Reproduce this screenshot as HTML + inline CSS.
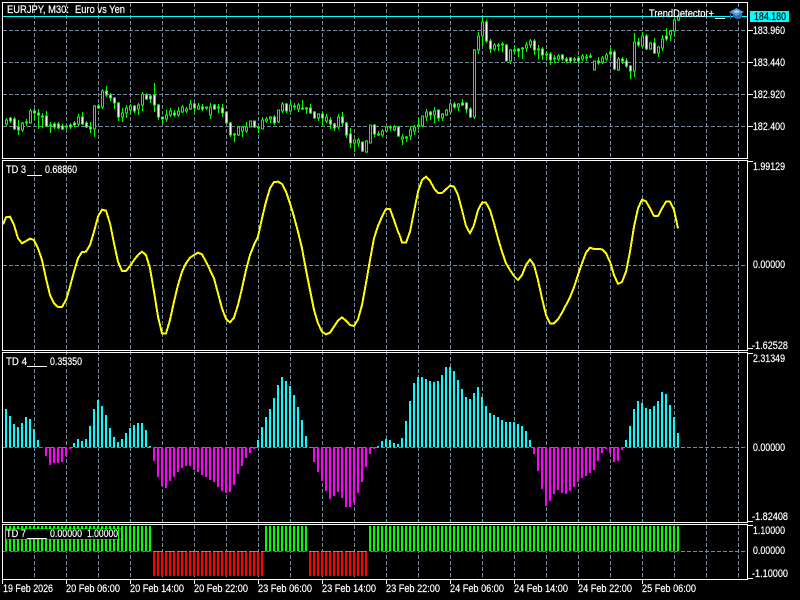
<!DOCTYPE html>
<html><head><meta charset="utf-8"><title>EURJPY M30</title>
<style>
html,body{margin:0;padding:0;background:#000;width:800px;height:600px;overflow:hidden}
svg{display:block;position:absolute;left:0;top:0}
text{font-family:"Liberation Sans",sans-serif;font-size:11px;fill:#fff;stroke:#fff;stroke-width:.2}
.c{shape-rendering:crispEdges}
</style></head><body>
<svg width="800" height="600" viewBox="0 0 800 600" xmlns="http://www.w3.org/2000/svg">
<rect width="800" height="600" fill="#000"/>
<g class="c" fill="none" stroke="#778899" stroke-width="1" stroke-dasharray="4 2">
<path d="M34.5 3V579M66.5 3V579M98.5 3V579M130.5 3V579M162.5 3V579M194.5 3V579M226.5 3V579M258.5 3V579M290.5 3V579M322.5 3V579M354.5 3V579M386.5 3V579M418.5 3V579M450.5 3V579M482.5 3V579M514.5 3V579M546.5 3V579M578.5 3V579M610.5 3V579M642.5 3V579M674.5 3V579M706.5 3V579M738.5 3V579"/>
<path d="M3 30.5H747M3 62.5H747M3 94.5H747M3 126.5H747M3 265.5H747M3 447.5H747M3 551.5H747"/>
</g>
<!-- candles -->
<g class="c" stroke="#00ff00" stroke-width="1">
<path fill="none" d="M6.5 118V126M10.5 117V123M14.5 117V130M18.5 120V135M22.5 122V132M26.5 119V126M30.5 109V123M34.5 109V120M38.5 109V129M42.5 113V128M46.5 111V127M50.5 122V133M54.5 122V129M58.5 122V129M62.5 124V130M66.5 125V129M70.5 123V129M74.5 121V127M78.5 114V126M82.5 112V125M86.5 121V128M90.5 122V133M94.5 105V137M98.5 104V109M102.5 89V109M106.5 86V97M110.5 93V101M114.5 97V109M118.5 102V121M122.5 108V122M126.5 105V118M130.5 104V113M134.5 105V113M138.5 103V115M142.5 92V111M146.5 93V100M150.5 95V103M154.5 83V112M158.5 104V120M162.5 117V124M166.5 110V122M170.5 108V117M174.5 110V117M178.5 107V117M182.5 105V113M186.5 107V113M190.5 100V110M194.5 103V113M198.5 103V110M202.5 104V111M206.5 107V110M210.5 103V119M214.5 104V110M218.5 104V113M222.5 104V117M226.5 112V124M230.5 122V137M234.5 133V142M238.5 126V136M242.5 126V137M246.5 122V133M250.5 121V127M254.5 121V128M258.5 126V133M262.5 117V129M266.5 117V123M270.5 116V123M274.5 115V125M278.5 110V123M282.5 102V113M286.5 103V113M290.5 102V113M294.5 103V110M298.5 103V112M302.5 100V110M306.5 107V114M310.5 104V114M314.5 111V119M318.5 113V121M322.5 112V126M326.5 114V123M330.5 117V129M334.5 123V131M338.5 114V129M342.5 112V126M346.5 122V138M350.5 128V148M354.5 140V152M358.5 138V147M362.5 142V152M366.5 140V153M370.5 125V143M374.5 124V137M378.5 131V136M382.5 129V137M386.5 126V132M390.5 125V131M394.5 125V131M398.5 126V137M402.5 134V145M406.5 136V142M410.5 126V140M414.5 125V135M418.5 117V129M422.5 116V127M426.5 109V121M430.5 111V120M434.5 107V123M438.5 110V121M442.5 113V121M446.5 109V116M450.5 103V113M454.5 102V109M458.5 103V111M462.5 99V106M466.5 102V113M470.5 107V118M474.5 49V119M478.5 32V54M482.5 16V46M486.5 20V43M490.5 39V53M494.5 43V51M498.5 43V51M502.5 42V52M506.5 44V61M510.5 49V64M514.5 45V53M518.5 48V57M522.5 47V59M526.5 42V52M530.5 39V48M534.5 39V55M538.5 45V59M542.5 47V60M546.5 52V60M550.5 52V65M554.5 55V63M558.5 54V61M562.5 54V61M566.5 57V63M570.5 57V63M574.5 57V62M578.5 56V63M582.5 54V61M586.5 54V61M590.5 53V58M594.5 61V70M598.5 57V65M602.5 56V64M606.5 53V61M610.5 48V58M614.5 50V70M618.5 57V71M622.5 57V64M626.5 58V68M630.5 65V79M634.5 33V77M638.5 38V47M642.5 32V47M646.5 34V50M650.5 42V50M654.5 38V54M658.5 46V57M662.5 35V51M666.5 28V41M670.5 30V41M674.5 18V35M678.5 16V21"/>
<path fill="#000" d="M5.5 120h2v4h-2zM21.5 123h2v7h-2zM29.5 111h2v12h-2zM77.5 117h2v7h-2zM93.5 106h2v23h-2zM101.5 91h2v16h-2zM121.5 113h2v4h-2zM125.5 108h2v5h-2zM129.5 106h2v4h-2zM137.5 105h2v4h-2zM141.5 94h2v11h-2zM165.5 115h2v4h-2zM169.5 111h2v4h-2zM177.5 111h2v4h-2zM181.5 107h2v5h-2zM185.5 109h2v2h-2zM189.5 104h2v5h-2zM197.5 106h2v3h-2zM209.5 107h2v8h-2zM233.5 134h2v1h-2zM237.5 127h2v8h-2zM241.5 127h2v4h-2zM245.5 127h2v4h-2zM249.5 121h2v6h-2zM261.5 120h2v9h-2zM265.5 119h2v2h-2zM269.5 117h2v2h-2zM277.5 110h2v12h-2zM281.5 104h2v7h-2zM289.5 105h2v6h-2zM297.5 105h2v4h-2zM317.5 114h2v4h-2zM325.5 117h2v4h-2zM337.5 117h2v10h-2zM353.5 140h2v3h-2zM357.5 140h2v3h-2zM365.5 141h2v11h-2zM369.5 125h2v18h-2zM381.5 131h2v4h-2zM385.5 127h2v4h-2zM389.5 127h2v1h-2zM393.5 127h2v3h-2zM401.5 137h2v2h-2zM409.5 130h2v6h-2zM413.5 127h2v4h-2zM421.5 116h2v10h-2zM425.5 112h2v5h-2zM433.5 111h2v4h-2zM441.5 114h2v4h-2zM445.5 110h2v5h-2zM449.5 104h2v8h-2zM457.5 104h2v3h-2zM473.5 50h2v67h-2zM477.5 36h2v14h-2zM481.5 22h2v14h-2zM493.5 45h2v4h-2zM509.5 50h2v11h-2zM525.5 45h2v3h-2zM529.5 41h2v4h-2zM557.5 56h2v3h-2zM581.5 56h2v3h-2zM593.5 61h2v9h-2zM601.5 58h2v4h-2zM605.5 55h2v4h-2zM617.5 59h2v11h-2zM633.5 42h2v29h-2zM641.5 36h2v10h-2zM649.5 43h2v6h-2zM657.5 47h2v6h-2zM661.5 39h2v9h-2zM669.5 31h2v4h-2zM673.5 20h2v11h-2zM677.5 16h2v4h-2z"/>
<path fill="#fff" d="M9.5 118h2v3h-2zM13.5 119h2v10h-2zM17.5 127h2v3h-2zM25.5 122h2v1h-2zM33.5 111h2v2h-2zM37.5 113h2v2h-2zM41.5 116h2v1h-2zM45.5 116h2v10h-2zM49.5 125h2v1h-2zM53.5 124h2v3h-2zM57.5 124h2v4h-2zM61.5 126h2v3h-2zM65.5 126h2v1h-2zM69.5 125h2v2h-2zM73.5 123h2v2h-2zM81.5 117h2v7h-2zM85.5 123h2v4h-2zM89.5 127h2v2h-2zM97.5 106h2v2h-2zM105.5 91h2v4h-2zM109.5 95h2v3h-2zM113.5 98h2v5h-2zM117.5 103h2v14h-2zM133.5 106h2v5h-2zM145.5 95h2v4h-2zM149.5 96h2v3h-2zM153.5 95h2v10h-2zM157.5 105h2v12h-2zM161.5 117h2v2h-2zM173.5 113h2v2h-2zM193.5 104h2v4h-2zM201.5 107h2v2h-2zM205.5 107h2v1h-2zM213.5 105h2v4h-2zM217.5 107h2v1h-2zM221.5 108h2v5h-2zM225.5 112h2v11h-2zM229.5 123h2v12h-2zM253.5 121h2v6h-2zM257.5 127h2v1h-2zM273.5 117h2v6h-2zM285.5 104h2v7h-2zM293.5 106h2v1h-2zM301.5 108h2v1h-2zM305.5 108h2v1h-2zM309.5 108h2v5h-2zM313.5 112h2v6h-2zM321.5 114h2v4h-2zM329.5 120h2v4h-2zM333.5 124h2v4h-2zM341.5 117h2v6h-2zM345.5 123h2v12h-2zM349.5 134h2v9h-2zM361.5 142h2v9h-2zM373.5 125h2v9h-2zM377.5 134h2v1h-2zM397.5 127h2v9h-2zM405.5 137h2v1h-2zM417.5 125h2v1h-2zM429.5 112h2v3h-2zM437.5 110h2v8h-2zM453.5 104h2v3h-2zM461.5 103h2v2h-2zM465.5 103h2v6h-2zM469.5 109h2v8h-2zM485.5 22h2v19h-2zM489.5 41h2v8h-2zM497.5 45h2v1h-2zM501.5 44h2v1h-2zM505.5 45h2v16h-2zM513.5 50h2v1h-2zM517.5 49h2v2h-2zM521.5 48h2v1h-2zM533.5 41h2v9h-2zM537.5 49h2v1h-2zM541.5 49h2v6h-2zM545.5 54h2v1h-2zM549.5 54h2v6h-2zM553.5 58h2v1h-2zM561.5 55h2v4h-2zM565.5 59h2v2h-2zM569.5 58h2v3h-2zM573.5 59h2v1h-2zM577.5 58h2v3h-2zM585.5 57h2v1h-2zM589.5 56h2v1h-2zM597.5 61h2v2h-2zM609.5 52h2v2h-2zM613.5 52h2v17h-2zM621.5 59h2v2h-2zM625.5 61h2v5h-2zM629.5 66h2v5h-2zM637.5 42h2v3h-2zM645.5 36h2v13h-2zM653.5 43h2v10h-2zM665.5 36h2v3h-2z"/>
</g>
<!-- TD3 line -->
<g class="c" fill="none" stroke="#ffff00" stroke-width="6" stroke-linejoin="round">
<polyline transform="translate(0,160) scale(.33333)" points="9,193 18,172 30,170 42,195 54,235 66,250 78,243 90,236 102,240 114,265 126,300 138,355 150,405 162,430 174,441 186,441 198,420 210,380 222,335 234,295 246,276 258,275 270,255 282,215 294,170 306,149 318,152 330,190 342,250 354,305 366,333 378,333 390,318 402,300 414,285 426,275 438,285 450,325 462,395 474,470 486,520 498,520 510,480 522,425 534,375 546,335 558,310 570,293 582,285 594,278 606,283 618,305 630,330 642,355 654,400 666,445 678,477 690,487 702,473 714,435 726,385 738,330 750,285 762,255 774,230 786,175 798,125 810,85 822,66 834,65 846,72 858,95 870,130 882,170 894,215 906,265 918,330 930,390 942,450 954,490 966,515 978,523 990,518 1002,500 1014,482 1026,472 1038,482 1050,495 1062,498 1074,478 1086,435 1098,370 1110,300 1122,235 1134,198 1146,170 1158,147 1170,147 1182,180 1194,215 1200,228"/>
<polyline transform="translate(400,160) scale(.33333)" points="0,228 6,248 18,248 30,215 42,155 54,95 66,60 78,50 90,62 102,85 114,99 126,99 138,88 150,77 162,80 174,105 186,150 198,198 210,220 222,195 234,150 246,128 258,128 270,150 282,190 294,235 306,275 318,310 330,330 342,348 354,360 366,345 378,315 390,298 402,315 414,360 426,415 438,465 450,490 462,490 474,478 486,458 498,435 510,412 522,382 534,345 546,310 558,278 570,263 582,267 594,267 606,268 618,280 630,305 642,345 654,372 666,366 678,335 690,275 702,200 714,145 726,119 738,124 750,145 762,168 774,168 786,145 798,125 810,125 822,150 834,205"/>
</g>
<!-- TD4 histogram -->
<g class="c" fill="none" stroke-width="6">
<g transform="translate(0,345) scale(.33333)">
<path stroke="#00ffff" d="M18 192V306M30 213V306M42 237V306M54 246V306M66 234V306M78 216V306M90 222V306M102 252V306M114 285V306M222 294V306M234 282V306M246 288V306M258 282V306M270 243V306M282 192V306M294 165V306M306 183V306M318 210V306M330 249V306M342 276V306M354 291V306M366 282V306M378 264V306M390 249V306M402 240V306M414 234V306M426 234V306M438 255V306M450 303V306M774 285V306M786 246V306M798 216V306"/>
<path stroke="#ff00ff" d="M126 306V309M138 306V333M150 306V360M162 306V354M174 306V354M186 306V351M198 306V333M210 306V312M462 306V348M474 306V396M486 306V423M498 306V429M510 306V408M522 306V396M534 306V381M546 306V369M558 306V363M570 306V363M582 306V375M594 306V381M606 306V390M618 306V396M630 306V405M642 306V411M654 306V426M666 306V438M678 306V444M690 306V441M702 306V420M714 306V387M726 306V363M738 306V339M750 306V324M762 306V312"/>
</g>
<g transform="translate(270,345) scale(.33333)">
<path stroke="#00ffff" d="M0 192V306M12 159V306M24 120V306M36 96V306M48 108V306M60 123V306M72 150V306M84 186V306M96 225V306M108 273V306M324 303V306M336 288V306M348 282V306M360 285V306M372 294V306M384 297V306M396 279V306M408 228V306M420 168V306M432 114V306M444 96V306M456 96V306M468 102V306M480 108V306M492 111V306M504 108V306M516 90V306M528 66V306M540 66V306M552 78V306M564 105V306M576 132V306M588 156V306M600 162V306M612 144V306M624 126V306M636 156V306M648 183V306M660 204V306M672 210V306M684 216V306M696 225V306M708 231V306M720 231V306M732 231V306M744 237V306M756 243V306M768 258V306M780 285V306"/>
<path stroke="#ff00ff" d="M132 306V351M144 306V381M156 306V408M168 306V438M180 306V462M192 306V453M204 306V441M216 306V459M228 306V486M240 306V486M252 306V474M264 306V444M276 306V411M288 306V366M300 306V327M312 306V312M792 306V327M804 306V378"/>
</g>
<g transform="translate(530,345) scale(.33333)">
<path stroke="#ff00ff" d="M36 306V432M48 306V483M60 306V468M72 306V447M84 306V435M96 306V444M108 306V447M120 306V438M132 306V426M144 306V411M156 306V399M168 306V393M180 306V384M192 306V375M204 306V348M216 306V324M228 306V312M240 306V324M252 306V351M264 306V348M276 306V315"/>
<path stroke="#00ffff" d="M288 285V306M300 243V306M312 192V306M324 168V306M336 174V306M348 189V306M360 192V306M372 183V306M384 168V306M396 141V306M408 147V306M420 180V306M432 216V306M444 264V306"/>
</g>
</g>
<!-- TD7 bars -->
<g class="c" fill="none" stroke-dasharray="2 2">
<g stroke="#00ff00">
<path stroke-width="25" d="M5 538.500H152M265 538.500H308M369 538.500H680"/>
<path stroke-width="1" d="M153 551.500H264M309 551.500H368"/>
</g>
<g stroke="#ff0000">
<path stroke-width="24" d="M153 564H264M309 564H368"/>
<path stroke-width="1" d="M5 551.500H152M265 551.500H308M369 551.500H680"/>
</g>
</g>
<g class="c">
<rect x="6" y="529" width="112" height="10" fill="#000"/>
<path d="M5 528h117v1H5zM121 528h1v11h-1zM5 539h117v1H5z" fill="#00ff00" opacity=".55"/>
</g>
<!-- cyan price line -->
<rect class="c" x="3" y="16" width="744" height="1" fill="#00ffff"/>
<!-- borders -->
<g class="c" fill="none" stroke="#fff" stroke-width="1">
<rect x="2.500" y="2.500" width="745" height="156"/>
<rect x="2.500" y="160.500" width="745" height="190"/>
<rect x="2.500" y="352.500" width="745" height="170"/>
<rect x="2.500" y="524.500" width="745" height="55"/>
<path d="M748 30.500h5M748 62.500h5M748 94.500h5M748 126.500h5M748 161.500h5M748 348.500h5M748 353.500h5M748 521.500h5M748 525.500h5M748 578.500h5M2.500 580V584M66.500 580V584M130.500 580V584M194.500 580V584M258.500 580V584M322.500 580V584M386.500 580V584M450.500 580V584M514.500 580V584M578.500 580V584M642.500 580V584"/>
</g>
<rect x="3" y="159" width="745" height="1" fill="#000"/>
<!-- indicator label underscores -->
<g class="c" fill="#fff">
<rect x="27" y="175" width="15" height="1"/>
<rect x="27" y="366" width="20" height="1"/>
<rect x="27" y="538" width="20" height="1"/>
<rect x="715" y="18" width="10" height="1"/>
</g>
<!-- labels -->
<text x="7" y="13" textLength="62" lengthAdjust="spacingAndGlyphs">EURJPY, M30:</text>
<text x="75" y="13" textLength="50" lengthAdjust="spacingAndGlyphs">Euro vs Yen</text>
<text x="649" y="17" textLength="65" lengthAdjust="spacingAndGlyphs">TrendDetector+</text>
<!-- icon -->
<g>
<path d="M733 13v4l3.500 2 4-.5 1.500-1.500v-4z" fill="#2a6fb0"/>
<path d="M729 12l7.500-4 7.500 4-7.500 4z" fill="#4f96d4"/>
<path d="M733 11.500l3.500-1.500 3.500 1.500-3.500 2z" fill="#a8d0f0"/>
<rect x="730" y="13" width="1" height="6" fill="#1f5f9f"/>
</g>
<text x="6" y="173" textLength="20" lengthAdjust="spacingAndGlyphs">TD 3</text>
<text x="45" y="173" textLength="32" lengthAdjust="spacingAndGlyphs">0.68860</text>
<text x="6" y="365" textLength="21" lengthAdjust="spacingAndGlyphs">TD 4</text>
<text x="50" y="365" textLength="32" lengthAdjust="spacingAndGlyphs">0.35350</text>
<text x="6" y="537" textLength="20" lengthAdjust="spacingAndGlyphs">TD 7</text>
<text x="50" y="537" textLength="32" lengthAdjust="spacingAndGlyphs">0.00000</text>
<text x="87" y="537" textLength="31" lengthAdjust="spacingAndGlyphs">1.00000</text>
<!-- price axis -->
<rect class="c" x="750" y="11" width="39" height="11" fill="#00ffff"/>
<text x="754" y="20" textLength="32" lengthAdjust="spacingAndGlyphs" style="fill:#000;stroke:#000">184.180</text>
<text x="753" y="34" textLength="32" lengthAdjust="spacingAndGlyphs">183.960</text>
<text x="753" y="66" textLength="32" lengthAdjust="spacingAndGlyphs">183.440</text>
<text x="753" y="98" textLength="32" lengthAdjust="spacingAndGlyphs">182.920</text>
<text x="753" y="130" textLength="32" lengthAdjust="spacingAndGlyphs">182.400</text>
<text x="753" y="170" textLength="32" lengthAdjust="spacingAndGlyphs">1.99129</text>
<text x="753" y="268" textLength="32" lengthAdjust="spacingAndGlyphs">0.00000</text>
<text x="752" y="349" textLength="36" lengthAdjust="spacingAndGlyphs">-1.62528</text>
<text x="753" y="362" textLength="32" lengthAdjust="spacingAndGlyphs">2.31349</text>
<text x="753" y="451" textLength="32" lengthAdjust="spacingAndGlyphs">0.00000</text>
<text x="752" y="520" textLength="36" lengthAdjust="spacingAndGlyphs">-1.82408</text>
<text x="753" y="534" textLength="32" lengthAdjust="spacingAndGlyphs">1.10000</text>
<text x="753" y="554" textLength="32" lengthAdjust="spacingAndGlyphs">0.00000</text>
<text x="752" y="577" textLength="36" lengthAdjust="spacingAndGlyphs">-1.10000</text>
<!-- time axis -->
<text x="3" y="592" textLength="50" lengthAdjust="spacingAndGlyphs">19 Feb 2026</text>
<text x="66" y="592" textLength="54" lengthAdjust="spacingAndGlyphs">20 Feb 06:00</text>
<text x="130" y="592" textLength="54" lengthAdjust="spacingAndGlyphs">20 Feb 14:00</text>
<text x="194" y="592" textLength="54" lengthAdjust="spacingAndGlyphs">20 Feb 22:00</text>
<text x="258" y="592" textLength="54" lengthAdjust="spacingAndGlyphs">23 Feb 06:00</text>
<text x="322" y="592" textLength="54" lengthAdjust="spacingAndGlyphs">23 Feb 14:00</text>
<text x="386" y="592" textLength="54" lengthAdjust="spacingAndGlyphs">23 Feb 22:00</text>
<text x="450" y="592" textLength="54" lengthAdjust="spacingAndGlyphs">24 Feb 06:00</text>
<text x="514" y="592" textLength="54" lengthAdjust="spacingAndGlyphs">24 Feb 14:00</text>
<text x="578" y="592" textLength="54" lengthAdjust="spacingAndGlyphs">24 Feb 22:00</text>
<text x="642" y="592" textLength="54" lengthAdjust="spacingAndGlyphs">25 Feb 06:00</text>
</svg>
</body></html>
